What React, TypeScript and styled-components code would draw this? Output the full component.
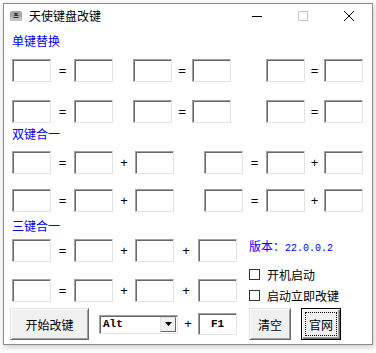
import React from "react";
import styled, { createGlobalStyle } from "styled-components";

const GlobalStyle = createGlobalStyle`
  html, body {
    margin: 0;
    padding: 0;
    background: #fff;
  }
  body {
    font-family: "Noto Sans CJK SC", "Liberation Sans", sans-serif;
    font-size: 12px;
    color: #000;
  }
`;

const Screen = styled.div`
  width: 376px;
  height: 353px;
  padding: 3px 0 0 3px;
  box-sizing: border-box;
`;

const Window = styled.div`
  width: 370px;
  height: 342px;
  box-sizing: border-box;
  border: 1px solid #8c8c8c;
  background: #fff;
  box-shadow: 1px 2px 6px rgba(0, 0, 0, 0.22);
  display: flex;
  flex-direction: column;
`;

const TitleBar = styled.div`
  height: 24px;
  display: flex;
  align-items: center;
  padding-left: 6px;
`;

const Title = styled.span`
  margin-left: 7px;
  font-size: 12px;
  line-height: 14px;
  flex: 1;
`;

const CaptionButton = styled.div`
  width: 46px;
  height: 24px;
  display: flex;
  align-items: center;
  justify-content: center;
`;

const Body = styled.div`
  padding: 6px 8px 0 8px;
  display: flex;
  flex-direction: column;
`;

const Label = styled.div<{ $mt?: number }>`
  color: #0000ff;
  font-size: 12px;
  line-height: 14px;
  margin-top: ${(p) => p.$mt ?? 0}px;
`;

const Row = styled.div<{ $mt: number }>`
  display: flex;
  align-items: center;
  margin-top: ${(p) => p.$mt}px;
`;

const Group = styled.div<{ $ml?: number }>`
  display: flex;
  align-items: center;
  margin-left: ${(p) => p.$ml ?? 0}px;
`;

const Key = styled.input.attrs({ type: "text", readOnly: true })`
  width: 39px;
  height: 23px;
  box-sizing: border-box;
  margin: 0;
  padding: 0;
  background: #fff;
  border: 1px solid;
  border-color: #a0a0a0 #e3e3e3 #e3e3e3 #a0a0a0;
  box-shadow: inset 1px 1px 0 #696969;
  outline: none;
  font-family: "Liberation Mono", monospace;
  font-size: 11px;
  font-weight: bold;
  text-align: center;
`;

const Op = styled.span<{ $w: number }>`
  width: ${(p) => p.$w}px;
  text-align: center;
  font-family: "Liberation Sans", sans-serif;
  font-size: 13px;
  line-height: 14px;
`;

const Triple = styled.div`
  display: flex;
  align-items: flex-start;
`;

const TripleKeys = styled.div`
  display: flex;
  flex-direction: column;
`;

const Side = styled.div`
  margin-left: 12px;
  display: flex;
  flex-direction: column;
`;

const Version = styled.div`
  margin-top: 6px;
  color: #0000ff;
  line-height: 14px;
  font-size: 12px;
  white-space: nowrap;
`;

const VersionNum = styled.span`
  font-family: "Liberation Mono", monospace;
  font-size: 10px;
`;

const CheckRow = styled.label<{ $mt: number }>`
  display: flex;
  align-items: center;
  height: 14px;
  margin-top: ${(p) => p.$mt}px;
  white-space: nowrap;
`;

const Box = styled.span`
  width: 11px;
  height: 11px;
  box-sizing: border-box;
  border: 1px solid #333;
  background: #fff;
  margin-right: 7px;
`;

const BottomRow = styled.div`
  display: flex;
  align-items: center;
  margin-top: 6px;
`;

const Button = styled.button<{ $w: number; $ml: number; $default?: boolean }>`
  position: relative;
  width: ${(p) => p.$w}px;
  height: 32px;
  margin: 0 0 0 ${(p) => p.$ml}px;
  padding: 0;
  background: #f0f0f0;
  font-family: "Noto Sans CJK SC", sans-serif;
  font-size: 12px;
  color: #000;
  border: 1px solid;
  border-color: ${(p) =>
    p.$default ? "#000" : "#e3e3e3 #696969 #696969 #e3e3e3"};
  box-shadow: ${(p) =>
    p.$default
      ? "inset 1px 1px 0 #fff, inset -1px -1px 0 #696969, inset -2px -2px 0 #a0a0a0"
      : "inset 1px 1px 0 #fff, inset -1px -1px 0 #a0a0a0"};
  &::after {
    content: "";
    display: ${(p) => (p.$default ? "block" : "none")};
    position: absolute;
    inset: 3px;
    border: 1px dotted #000;
  }
`;

const Select = styled.div`
  width: 79px;
  height: 19px;
  margin-left: 10px;
  box-sizing: border-box;
  padding: 1px 1px 1px 3px;
  display: flex;
  align-items: center;
  justify-content: space-between;
  background: #fff;
  border: 1px solid;
  border-color: #a0a0a0 #e3e3e3 #e3e3e3 #a0a0a0;
  box-shadow: inset 1px 1px 0 #696969;
  font-family: "Liberation Mono", monospace;
  font-size: 11px;
  font-weight: bold;
`;

const Arrow = styled.span`
  width: 16px;
  height: 15px;
  box-sizing: border-box;
  background: #f0f0f0;
  border: 1px solid;
  border-color: #e3e3e3 #696969 #696969 #e3e3e3;
  display: flex;
  align-items: center;
  justify-content: center;
`;

const F1 = styled(Key)`
  height: 22px;
`;

function AppIcon() {
  return (
    <svg width="12" height="10" viewBox="0 0 12 10">
      <rect x="0" y="0" width="12" height="10" rx="2" fill="#a8a8a8" />
      <rect x="0" y="6" width="12" height="4" rx="1.5" fill="#c4c4c4" />
      <path d="M4 2.5h3l-2 2h3.5M3.5 6.5h5" stroke="#333" strokeWidth="1.2" fill="none" />
    </svg>
  );
}

const singleGroups = [
  { ml: 0, w: 23 },
  { ml: 20, w: 20 },
  { ml: 35, w: 19 },
];

function SingleRow({ mt }: { mt: number }) {
  return (
    <Row $mt={mt}>
      {singleGroups.map((g, i) => (
        <Group key={i} $ml={g.ml}>
          <Key />
          <Op $w={g.w}>=</Op>
          <Key />
        </Group>
      ))}
    </Row>
  );
}

function DoubleRow({ mt }: { mt: number }) {
  return (
    <Row $mt={mt}>
      <Group>
        <Key />
        <Op $w={23}>=</Op>
        <Key />
        <Op $w={22}>+</Op>
        <Key />
      </Group>
      <Group $ml={30}>
        <Key />
        <Op $w={23}>=</Op>
        <Key />
        <Op $w={19}>+</Op>
        <Key />
      </Group>
    </Row>
  );
}

function TripleRow({ mt }: { mt: number }) {
  return (
    <Row $mt={mt}>
      <Key />
      <Op $w={23}>=</Op>
      <Key />
      <Op $w={22}>+</Op>
      <Key />
      <Op $w={24}>+</Op>
      <Key />
    </Row>
  );
}

export default function App() {
  return (
    <>
      <GlobalStyle />
      <Screen>
        <Window>
          <TitleBar>
            <AppIcon />
            <Title>天使键盘改键</Title>
            <CaptionButton>
              <svg width="10" height="1">
                <rect width="10" height="1" fill="#000" />
              </svg>
            </CaptionButton>
            <CaptionButton>
              <svg width="10" height="10">
                <rect x="0.5" y="0.5" width="9" height="9" fill="none" stroke="#c6c6c6" />
              </svg>
            </CaptionButton>
            <CaptionButton>
              <svg width="10" height="10">
                <path d="M0 0L10 10M10 0L0 10" stroke="#000" strokeWidth="1" />
              </svg>
            </CaptionButton>
          </TitleBar>
          <Body>
            <Label>单键替换</Label>
            <SingleRow mt={11} />
            <SingleRow mt={18} />

            <Label $mt={4}>双键合一</Label>
            <DoubleRow mt={10} />
            <DoubleRow mt={15} />

            <Label $mt={7}>三键合一</Label>
            <Triple>
              <TripleKeys>
                <TripleRow mt={6} />
                <TripleRow mt={17} />
              </TripleKeys>
              <Side>
                <Version>
                  版本：<VersionNum>22.0.0.2</VersionNum>
                </Version>
                <CheckRow $mt={11}>
                  <Box />
                  开机启动
                </CheckRow>
                <CheckRow $mt={7}>
                  <Box />
                  启动立即改键
                </CheckRow>
              </Side>
            </Triple>

            <BottomRow>
              <Button $w={79} $ml={-2}>
                开始改键
              </Button>
              <Select>
                <span>Alt</span>
                <Arrow>
                  <svg width="7" height="4">
                    <path d="M0 0h7L3.5 4z" fill="#000" />
                  </svg>
                </Arrow>
              </Select>
              <Op $w={20}>+</Op>
              <F1 value="F1" />
              <Button $w={42} $ml={12}>
                清空
              </Button>
              <Button $w={40} $ml={10} $default>
                官网
              </Button>
            </BottomRow>
          </Body>
        </Window>
      </Screen>
    </>
  );
}
